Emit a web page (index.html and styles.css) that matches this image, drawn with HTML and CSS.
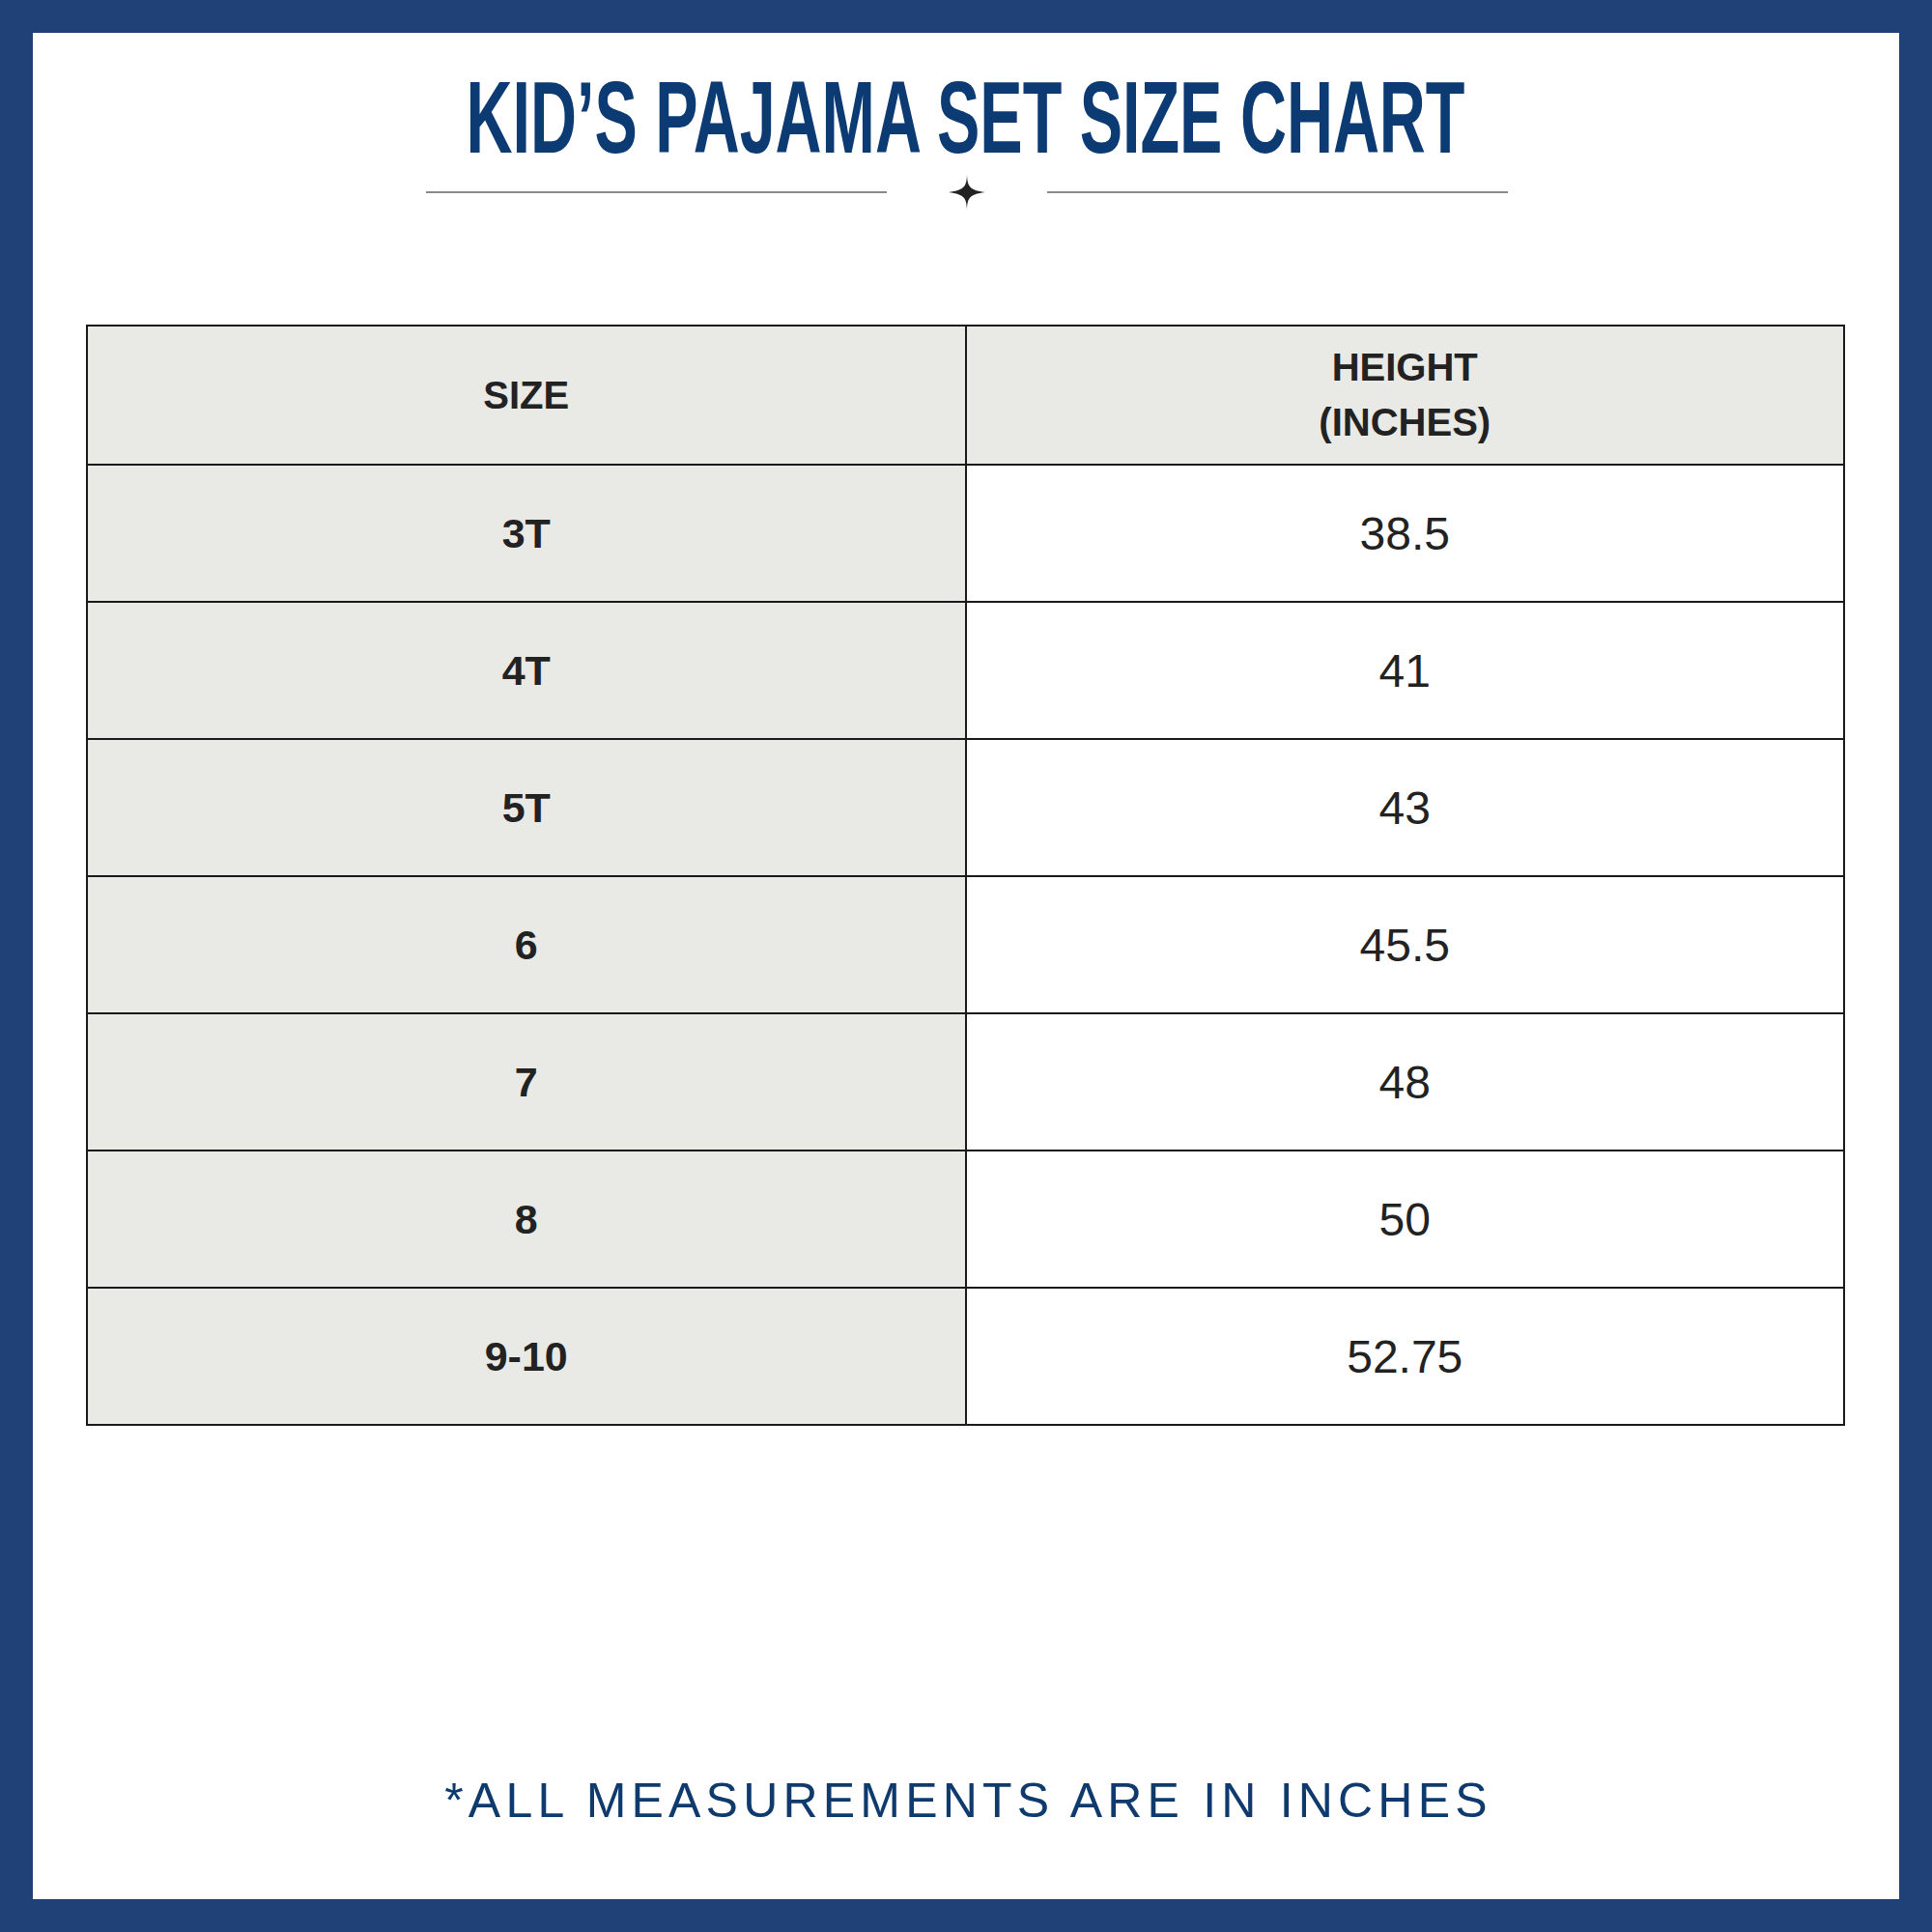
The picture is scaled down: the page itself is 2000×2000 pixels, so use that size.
FILE: index.html
```html
<!DOCTYPE html>
<html lang="en">
<head>
<meta charset="utf-8">
<title>Kid's Pajama Set Size Chart</title>
<link rel="stylesheet" href="styles.css">
</head>
<body>
<div class="frame">
  <div class="panel">
    <header class="heading">
      <h1 class="title"><span class="title-text">KID’S PAJAMA SET SIZE CHART</span></h1>
      <div class="divider">
        <span class="rule"></span>
        <svg class="star" width="38" height="36" viewBox="0 0 38 36" aria-hidden="true">
          <path d="M19 0 C19.6 11 20.6 15.8 38 18 C20.6 20.2 19.6 25 19 36 C18.4 25 17.4 20.2 0 18 C17.4 15.8 18.4 11 19 0 Z" fill="#222"/>
          <circle cx="19" cy="18" r="3.2" fill="#222"/>
        </svg>
        <span class="rule"></span>
      </div>
    </header>

    <div class="chart">
      <div class="cell head">SIZE</div>
      <div class="cell head">HEIGHT<br>(INCHES)</div>

      <div class="cell size">3T</div><div class="cell value">38.5</div>
      <div class="cell size">4T</div><div class="cell value">41</div>
      <div class="cell size">5T</div><div class="cell value">43</div>
      <div class="cell size">6</div><div class="cell value">45.5</div>
      <div class="cell size">7</div><div class="cell value">48</div>
      <div class="cell size">8</div><div class="cell value">50</div>
      <div class="cell size">9-10</div><div class="cell value">52.75</div>
    </div>

    <p class="note">*ALL MEASUREMENTS ARE IN INCHES</p>
  </div>
</div>
</body>
</html>
```

FILE: styles.css
```css
html, body {
  margin: 0;
  padding: 0;
  background: #ffffff;
}

.frame {
  width: 2000px;
  height: 2000px;
  box-sizing: border-box;
  padding: 34px;
  background: #1f4177;
}

.panel {
  height: 1932px;
  box-sizing: border-box;
  background: #ffffff;
  padding: 34px 55px 0 55px;
  display: flex;
  flex-direction: column;
}

.heading {
  display: flex;
  flex-direction: column;
  align-items: center;
}

.title {
  margin: 0;
  height: 106px;
  line-height: 106px;
  text-align: center;
  font-family: "Liberation Sans", Arial, sans-serif;
  font-weight: 700;
  font-size: 106px;
  color: #0c3b74;
  white-space: nowrap;
}

.title-text {
  display: inline-block;
  transform: scaleX(0.627);
  transform-origin: center;
}

.divider {
  margin-top: 7px;
  display: flex;
  align-items: center;
  gap: 64px;
  margin-left: 2px;
}

.rule {
  display: block;
  width: 477px;
  height: 2px;
  background: #8a8a8a;
}

.star {
  display: block;
}

.chart {
  margin-top: 119px;
  display: grid;
  grid-template-columns: 1fr 1fr;
  grid-template-rows: 142px repeat(7, 140px);
  gap: 2px;
  padding: 2px;
  background: #1a1a1a;
  width: 1821px;
  box-sizing: border-box;
}

.cell {
  display: flex;
  align-items: center;
  justify-content: center;
  text-align: center;
  font-family: "Liberation Sans", Arial, sans-serif;
  color: #222222;
  background: #ffffff;
}

.head {
  background: #e9e9e5;
  font-weight: 700;
  font-size: 40px;
  line-height: 57px;
}

.size {
  background: #e9e9e5;
  font-weight: 700;
  font-size: 43px;
}

.value {
  font-weight: 400;
  font-size: 48px;
}

.note {
  margin: 363px 0 0 0;
  padding-left: 5px;
  text-align: center;
  font-family: "Liberation Sans", Arial, sans-serif;
  font-size: 50px;
  line-height: 50px;
  letter-spacing: 5.2px;
  color: #0e3a6e;
}
```
